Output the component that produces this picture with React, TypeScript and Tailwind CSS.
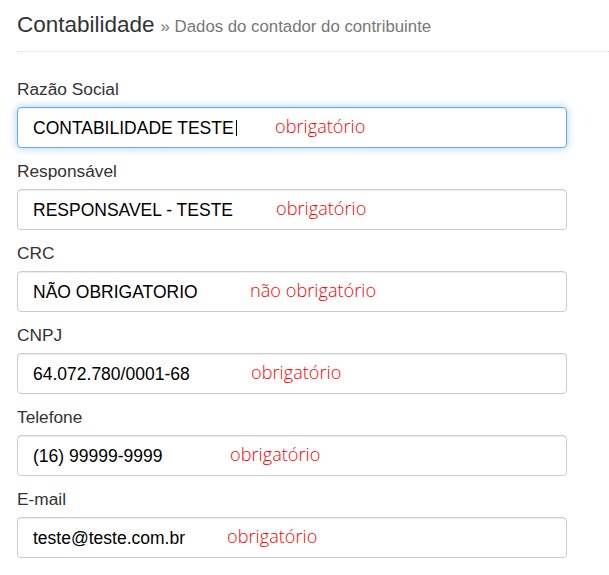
import React from "react";

type Field = {
  label: string;
  value: string;
  note: string;
  noteClass: string;
  focus?: boolean;
};

const fields: Field[] = [
  { label: "Razão Social", value: "CONTABILIDADE TESTE", note: "obrigatório", noteClass: "left-[257px]", focus: true },
  { label: "Responsável", value: "RESPONSAVEL - TESTE", note: "obrigatório", noteClass: "left-[258px]" },
  { label: "CRC", value: "NÃO OBRIGATORIO", note: "não obrigatório", noteClass: "left-[232px]" },
  { label: "CNPJ", value: "64.072.780/0001-68", note: "obrigatório", noteClass: "left-[233px]" },
  { label: "Telefone", value: "(16) 99999-9999", note: "obrigatório", noteClass: "left-[212px]" },
  { label: "E-mail", value: "teste@teste.com.br", note: "obrigatório", noteClass: "left-[209px]" },
];

export default function App() {
  return (
    <div className="min-h-screen bg-white pl-[17px] font-['Liberation_Sans',Arial,sans-serif]">
      <div className="flex items-baseline border-b border-dotted border-[#d9d9d9] pt-[11px] pb-[12px]">
        <span className="text-[22.5px] leading-[28px] text-[#333]">Contabilidade</span>
        <span className="ml-[6px] text-[16.8px] text-[#777]">» Dados do contador do contribuinte</span>
      </div>
      <div className="mt-[25px] flex w-[550px] flex-col">
        {fields.map((f) => (
          <div key={f.label} className="mb-[11px] flex flex-col">
            <div className="mb-[6px] h-[24px] text-[17.3px] leading-[24px] text-[#333]">{f.label}</div>
            <div
              className={
                f.focus
                  ? "relative flex h-[41px] items-center rounded-[4px] border border-[#66afe9] bg-white pl-[15px] shadow-[inset_0_1px_1px_rgba(0,0,0,0.075),0_0_8px_rgba(102,175,233,0.6)]"
                  : "relative flex h-[41px] items-center rounded-[4px] border border-[#cccccc] bg-white pl-[15px] shadow-[inset_0_1px_1px_rgba(0,0,0,0.075)]"
              }
            >
              <span className="text-[17.5px] leading-[20px] text-black">{f.value}</span>
              {f.focus && <span className="ml-[2px] h-[16px] w-px bg-black" />}
              <span
                className={
                  "absolute top-0 flex h-full items-center pb-[3px] font-['Open_Sans',sans-serif] text-[18.2px] font-[350] text-[#ff0000] " +
                  f.noteClass
                }
              >
                {f.note}
              </span>
            </div>
          </div>
        ))}
      </div>
    </div>
  );
}
